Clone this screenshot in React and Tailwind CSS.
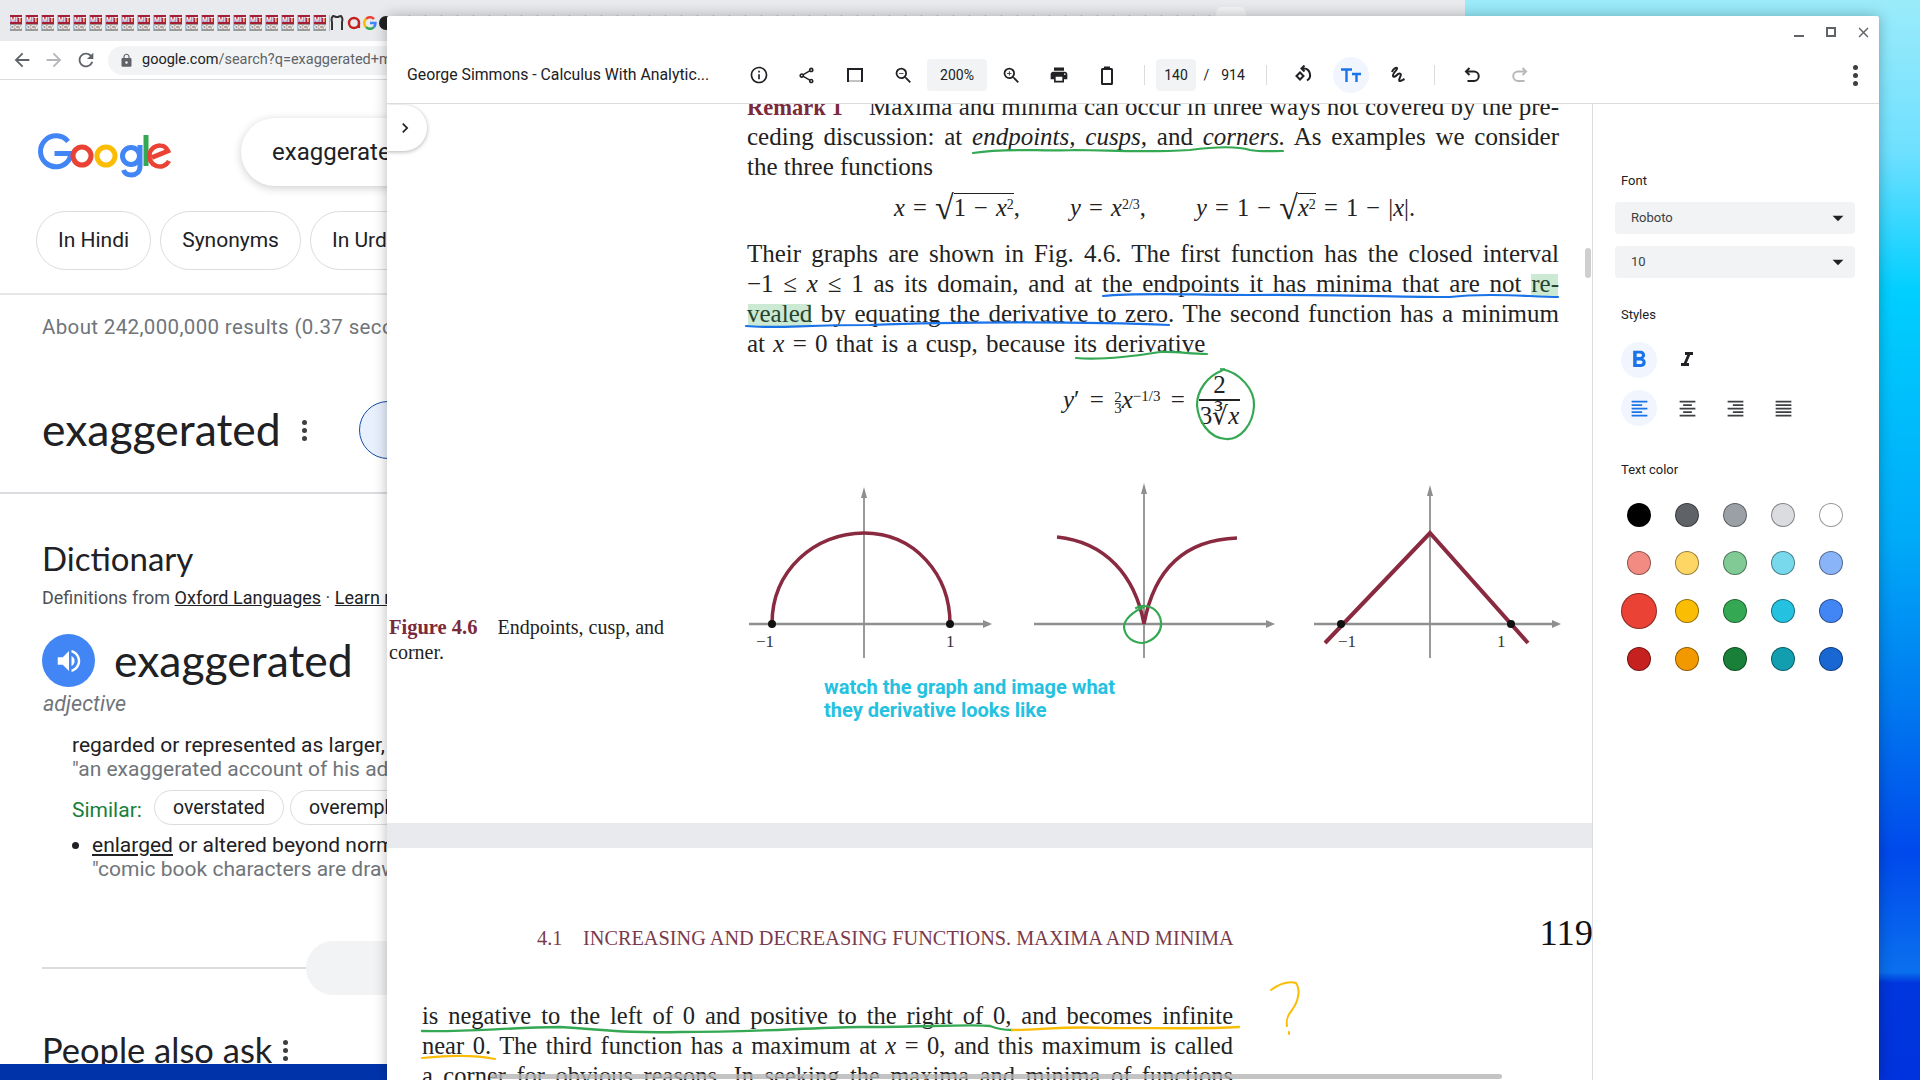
import React from "react";
import { MdInfoOutline, MdOutlineShare, MdZoomIn, MdZoomOut, MdPrint, MdLock, MdArrowBack, MdArrowForward, MdRefresh, MdChevronRight, MdArrowDropDown, MdFormatAlignLeft, MdFormatAlignCenter, MdFormatAlignRight, MdFormatAlignJustify, MdFormatBold, MdFormatItalic, MdClose, MdVolumeUp } from "react-icons/md";

const roboto = "font-['Roboto',sans-serif]";
const serif = "font-['Liberation_Serif',serif]";
const gsans = "font-['Lato','Roboto',sans-serif]";

function Favicons() {
  const items = Array.from({ length: 20 });
  const ticks = Array.from({ length: 51 });
  return (
    <div className="flex items-center h-[41px] pl-[10px] pt-[5px]">
      {items.map((_, i) => (
        <div key={i} className="w-[16px] h-[20px] flex items-center shrink-0">
          <div className="w-[12px] h-[16px] flex flex-col overflow-hidden">
            <div className="h-[9px] bg-[#a31f34] text-white text-[7px] leading-[9px] font-bold text-center font-['Liberation_Sans',sans-serif]">MIT</div>
            <div className="h-[7px] bg-[#9a9a9a] text-white text-[6px] leading-[7px] font-bold text-center font-['Liberation_Sans',sans-serif]">OCW</div>
          </div>
          <div className="w-px h-[16px] bg-[#b5b7ba] ml-[3px]" />
        </div>
      ))}
      <div className="w-[16px] h-[20px] flex items-center shrink-0">
        <svg width="14" height="16" viewBox="0 0 14 16"><path d="M2 15V7C1 4 2 2 3 1c1 0 2 .5 3 1h2c1-.5 2-1 3-1 1 1 2 3 1 6v8" fill="none" stroke="#333" strokeWidth="2" /></svg>
      </div>
      <div className="w-[16px] h-[20px] flex items-center justify-center shrink-0">
        <svg width="14" height="14" viewBox="0 0 14 14"><circle cx="7" cy="7" r="5" fill="none" stroke="#c5221f" strokeWidth="2.4" /><path d="M12 7v5" stroke="#c5221f" strokeWidth="2.2" /></svg>
      </div>
      <div className="w-[16px] h-[20px] flex items-center justify-center shrink-0">
        <svg width="14" height="14" viewBox="0 0 14 14" fill="none" strokeWidth="2.6"><path d="M11 3A5.4 5.4 0 0 0 3 3" stroke="#ea4335" /><path d="M3 3a5.4 5.4 0 0 0 0 8" stroke="#fbbc04" /><path d="M3 11a5.4 5.4 0 0 0 8 0" stroke="#34a853" /><path d="M11 11c1-1 1.400-2 1.400-4H7" stroke="#4285f4" /></svg>
      </div>
      <div className="w-[16px] h-[20px] flex items-center justify-center shrink-0">
        <div className="w-[14px] h-[14px] rounded-full bg-[#222]" />
      </div>
      {ticks.map((_, i) => (
        <div key={i} className="w-[16px] h-[16px] shrink-0 flex justify-end">
          <div className="w-px h-[16px] bg-[#b5b7ba]" />
        </div>
      ))}
    </div>
  );
}

function GoogleLogo() {
  return (
    <svg width="142" height="48" viewBox="0 0 140 48" fill="none" className="shrink-0 mt-[4px]">
      <path d="M32 7.500A15.500 15.500 0 1 0 32.500 26.500C34 24.500 34.500 22.500 34 19.500H18.500" stroke="#4285f4" strokeWidth="5" transform="translate(0,2)" />
      <circle cx="46" cy="24" r="9" stroke="#ea4335" strokeWidth="5" />
      <circle cx="70" cy="24" r="9" stroke="#fbbc04" strokeWidth="5" />
      <circle cx="95" cy="24" r="8.500" stroke="#4285f4" strokeWidth="5" />
      <path d="M104 13v21c0 6-4 9-8.500 9-4 0-7-2-8-5" stroke="#4285f4" strokeWidth="5" />
      <path d="M110 3v31" stroke="#34a853" strokeWidth="5" />
      <path d="M116 25.500l16-6.500C130 15 127.500 13.500 124.500 13.500A10.500 10.500 0 1 0 133 29" stroke="#ea4335" strokeWidth="4.600" />
    </svg>
  );
}

function Chip({ children }) {
  return <div className="h-[59px] px-[21px] pt-[1px] flex items-center rounded-[30px] border border-[#dadce0] text-[21px] text-[#202124] whitespace-nowrap shrink-0">{children}</div>;
}

function Dots({ className = "" }) {
  return (
    <div className={`flex flex-col gap-[3px] shrink-0 ${className}`}>
      <span className="w-[5px] h-[5px] rounded-full bg-[#3c4043]" />
      <span className="w-[5px] h-[5px] rounded-full bg-[#3c4043]" />
      <span className="w-[5px] h-[5px] rounded-full bg-[#3c4043]" />
    </div>
  );
}

function BrowserWindow() {
  return (
    <div className={`absolute left-0 top-0 w-[1465px] h-[1064px] bg-white overflow-hidden flex flex-col ${roboto}`}>
      <div className="h-[41px] bg-[#e8eaed] shrink-0 relative">
        <Favicons />
        <div className="absolute left-[1216px] top-[7px] w-[30px] h-[34px] rounded-t-[6px] bg-[#f4f5f6]" />
      </div>
      <div className="h-[39px] shrink-0 border-b border-[#dadce0] flex items-center bg-white">
        <MdArrowBack className="ml-[11px] text-[#5f6368]" size={22} />
        <MdArrowForward className="ml-[10px] text-[#b4b6b9]" size={22} />
        <MdRefresh className="ml-[10px] text-[#5f6368]" size={22} />
        <div className="ml-[11px] w-[700px] h-[29px] rounded-full bg-[#f1f3f4] flex items-center pl-[11px] text-[14.500px] whitespace-nowrap">
          <MdLock className="text-[#5f6368] mr-[8px]" size={15} />
          <span className="text-[#202124]">google.com</span>
          <span className="text-[#5f6368]">/search?q=exaggerated+meaning</span>
        </div>
      </div>
      <div className="flex items-center h-[148px] shrink-0 pl-[35px]">
        <GoogleLogo />
        <div className="ml-[64px] w-[900px] h-[68px] rounded-[34px] bg-white shadow-[0_2px_8px_rgba(32,33,36,0.22)] pl-[31px] flex items-center text-[24px] text-[#202124] -mt-[4px]">exaggerated</div>
      </div>
      <div className="flex gap-[9px] pl-[36px] -mt-[17px] h-[84px] border-b-2 border-[#e6e7e9] shrink-0">
        <Chip>In Hindi</Chip>
        <Chip>Synonyms</Chip>
        <Chip>In Urdu</Chip>
      </div>
      <div className="pl-[42px] pt-[18px] h-[46px] shrink-0 text-[20.500px] tracking-[0.35px] leading-[28px] text-[#70757a] whitespace-nowrap">About 242,000,000 results (0.37 seconds)</div>
      <div className="h-[153px] shrink-0 flex items-center pl-[42px] pt-[27px] border-b-2 border-[#dadce0]">
        <span className={`${gsans} text-[44.500px] leading-[60px] text-[#202124] w-[260px] whitespace-nowrap -mt-[2px]`}>exaggerated</span>
        <Dots />
        <div className="ml-[52px] w-[58px] h-[58px] rounded-full bg-[#e8f0fe] border border-[#174ea6] shrink-0" />
      </div>
      <div className={`pl-[42px] pt-[43px] shrink-0 h-[86px] ${gsans} text-[33px] leading-[42px] text-[#202124]`}>Dictionary</div>
      <div className="pl-[42px] pt-[5px] h-[31px] shrink-0 text-[18px] leading-[26px] text-[#4d5156] whitespace-nowrap">
        Definitions from <span className="underline text-[#202124]">Oxford Languages</span> · <span className="underline text-[#202124]">Learn more</span>
      </div>
      <div className="flex items-center ml-[42px] mt-[23px] h-[53px] shrink-0">
        <div className="w-[53px] h-[53px] rounded-full bg-[#4285f4] flex items-center justify-center shrink-0">
          <MdVolumeUp className="text-white" size={30} />
        </div>
        <span className={`${gsans} text-[44.500px] leading-[53px] text-[#202124] ml-[19px] whitespace-nowrap -mt-[2px]`}>exaggerated</span>
      </div>
      <div className="pl-[43px] pt-[3px] h-[31px] shrink-0 text-[21.500px] italic leading-[28px] text-[#70757a]">adjective</div>
      <div className="pl-[72px] pt-[15px] h-[39px] shrink-0 text-[21px] leading-[24px] whitespace-nowrap text-[#202124]">regarded or represented as larger, better, or worse than in reality.</div>
      <div className="pl-[72px] h-[24px] shrink-0 text-[21px] leading-[24px] whitespace-nowrap text-[#70757a]">"an exaggerated account of his adventures"</div>
      <div className="pl-[72px] pt-[9px] flex items-start gap-[12px] whitespace-nowrap h-[44px] shrink-0">
        <span className="text-[21px] text-[#188038] leading-[24px] pt-[8px] w-[70px]">Similar:</span>
        <div className="h-[35px] rounded-full border border-[#dadce0] px-[18px] flex items-center text-[19.500px] text-[#202124]">overstated</div>
        <div className="h-[35px] rounded-full border border-[#dadce0] px-[18px] flex items-center text-[19.500px] text-[#202124] -ml-[6px]">overemphasized</div>
      </div>
      <div className="pl-[72px] mt-[8px] flex items-center whitespace-nowrap h-[24px] text-[21px] text-[#202124] leading-[24px] shrink-0">
        <span className="w-[7px] h-[7px] rounded-full bg-[#202124] mr-[13px]" />
        <span><span className="underline">enlarged</span> or altered beyond normal proportions.</span>
      </div>
      <div className="pl-[92px] h-[24px] shrink-0 text-[21px] leading-[24px] whitespace-nowrap text-[#70757a]">"comic book characters are drawn with exaggerated features"</div>
      <div className="flex items-center pl-[42px] pt-[60px] shrink-0">
        <div className="w-[264px] h-[2px] bg-[#dadce0]" />
        <div className="w-[300px] h-[54px] rounded-full bg-[#f1f3f4]" />
      </div>
      <div className="flex items-center pl-[42px] pt-[33px] shrink-0">
        <span className={`${gsans} text-[34.500px] leading-[44px] text-[#202124] whitespace-nowrap`}>People also ask</span>
        <Dots className="ml-[11px]" />
      </div>
    </div>
  );
}

function IconCell({ children, className = "" }) {
  return <div className={`w-[48px] h-[36px] flex items-center justify-center shrink-0 text-[#202124] ${className}`}>{children}</div>;
}

function Sep() {
  return <div className="w-px h-[20px] bg-[#dadce0] shrink-0" />;
}

function PdfToolbar() {
  return (
    <div className="h-[57px] shrink-0 border-b border-[#dadce0] flex items-center text-[#202124]">
      <div className="w-[348px] pl-[20px] text-[15.800px] whitespace-nowrap shrink-0">George Simmons - Calculus With Analytic...</div>
      <IconCell><MdInfoOutline size={20} /></IconCell>
      <IconCell className="-translate-x-[1px]"><MdOutlineShare size={19} /></IconCell>
      <IconCell>
        <svg width="16" height="14" viewBox="0 0 16 14" fill="none" stroke="#202124" strokeWidth="2"><path d="M1 14V1h14v13" /><path d="M2 13h12" strokeWidth="1" stroke="#888" /></svg>
      </IconCell>
      <IconCell><MdZoomOut size={21} /></IconCell>
      <div className="w-[60px] h-[32px] rounded bg-[#f1f3f4] flex items-center justify-center text-[14px] shrink-0">200%</div>
      <IconCell><MdZoomIn size={21} /></IconCell>
      <IconCell><MdPrint size={20} /></IconCell>
      <IconCell>
        <svg width="12" height="19" viewBox="0 0 12 19" fill="none" stroke="#202124" strokeWidth="2"><rect x="1" y="3" width="10" height="15" rx="0.5" /><path d="M3 1.500h6" /></svg>
      </IconCell>
      <div className="w-[13px] shrink-0" />
      <Sep />
      <div className="w-[11px] shrink-0" />
      <div className="w-[40px] h-[32px] rounded bg-[#f1f3f4] flex items-center justify-center text-[14px] shrink-0">140</div>
      <div className="w-[21px] text-center text-[14px] shrink-0">/</div>
      <div className="w-[32px] text-center text-[14px] shrink-0">914</div>
      <div className="w-[17px] shrink-0" />
      <Sep />
      <div className="w-[12px] shrink-0" />
      <IconCell>
        <svg width="20" height="20" viewBox="0 0 20 20" fill="none" stroke="#202124" strokeWidth="2"><path d="M3.500 11l3.500-3.500 3.500 3.500-3.500 3.500z" /><path d="M9 3.500h2a6.500 6.500 0 0 1 3 12" /><path d="M11.500 0.500L8.500 3.500l3 3" /></svg>
      </IconCell>
      <div className="w-[48px] h-[36px] flex items-center justify-center shrink-0">
        <div className="w-[36px] h-[36px] rounded-full bg-[#f1f6fe] flex items-center justify-center">
          <svg width="20" height="14" viewBox="0 0 20 14" fill="none" stroke="#1a73e8" strokeWidth="2.400"><path d="M0 1.500h11M5.500 1.500V14" /><path d="M11 6h9M15.500 6v8" /></svg>
        </div>
      </div>
      <IconCell>
        <svg width="18" height="18" viewBox="0 0 18 18" fill="none" stroke="#202124" strokeWidth="2"><path d="M2 6c1-3 4-5 5-4 1 2-5 5-4 8 .5 2 3 0 5-2 2-1 3.500 0 2.500 2-1 3-2 4-1 5 1 .5 3-1 5-2" /></svg>
      </IconCell>
      <div className="w-[11px] shrink-0" />
      <Sep />
      <div className="w-[13px] shrink-0" />
      <IconCell>
        <svg width="16" height="16" viewBox="0 0 16 16" fill="none" stroke="#202124" strokeWidth="2"><path d="M5.500 1L2 4.500 5.500 8" /><path d="M2 4.500h8a4 4 0 0 1 0 9.500H3.500" /></svg>
      </IconCell>
      <IconCell>
        <svg width="16" height="16" viewBox="0 0 16 16" fill="none" stroke="#b8b8b8" strokeWidth="2"><path d="M10.500 1L14 4.500 10.500 8" /><path d="M14 4.500H6a4 4 0 0 0 0 9.500h6.500" /></svg>
      </IconCell>
      <div className="ml-auto w-[48px] h-[36px] flex items-center justify-center shrink-0"><Dots /></div>
    </div>
  );
}

function L({ children, last = true, className = "" }) {
  return <div className={`h-[30px] leading-[30px] ${last ? "[text-align-last:justify]" : "whitespace-nowrap"} ${className}`}>{children}</div>;
}

function Ink() {
  const green = "#34a853", blue = "#1a73e8", yellow = "#fbbc04";
  return (
    <svg className="absolute left-0 top-0 pointer-events-none" width="1205" height="976" viewBox="387 104 1205 976" fill="none" strokeLinecap="round">
      <rect x="1531" y="274" width="27" height="23" fill="#34a853" fillOpacity="0.25" />
      <rect x="748" y="304" width="63" height="23" fill="#34a853" fillOpacity="0.25" />
      <path d="M973 153C1010 147 1040 152 1075 150C1110 150 1140 153 1190 150C1220 146 1240 147 1250 150C1262 152 1270 151 1283 151" stroke={green} strokeWidth="2.200" />
      <path d="M1103 296C1140 292 1190 295 1250 295C1320 294 1400 297 1450 297C1490 292 1530 297 1558 297" stroke={blue} strokeWidth="2.200" />
      <path d="M746 326C775 329 800 325 870 325C950 322 1080 321 1169 325" stroke={blue} strokeWidth="2.200" />
      <path d="M1076 358C1100 360 1135 356 1160 352C1175 351 1190 354 1207 354" stroke={green} strokeWidth="2.200" />
      <path d="M1221 369C1240 372 1255 390 1254 406C1253 425 1240 440 1226 439C1208 438 1198 420 1197 405C1197 390 1208 376 1221 371L1224 369" stroke={green} strokeWidth="2.200" />
      <path d="M1144 607C1132 612 1124 620 1124 627C1125 638 1134 643 1143 643C1154 641 1162 632 1161 622C1160 612 1152 606 1145 606C1142 605 1138 607 1136 608" stroke={green} strokeWidth="2.200" />
      <path d="M422 1031C470 1032 500 1028 560 1027C610 1030 620 1033 680 1032C760 1032 800 1028 860 1027C920 1027 975 1024 990 1026C1000 1030 1006 1030 1012 1030" stroke={green} strokeWidth="2.400" />
      <path d="M1012 1030C1040 1030 1060 1026 1110 1028C1170 1028 1210 1029 1239 1027" stroke={yellow} strokeWidth="2.400" />
      <path d="M422 1058C445 1056 470 1054 495 1059" stroke={yellow} strokeWidth="2.200" />
      <path d="M1271 990C1278 985 1288 981 1296 983C1301 990 1298 1002 1292 1010C1287 1016 1286 1020 1287 1026M1289 1032v2" stroke={yellow} strokeWidth="2" />
    </svg>
  );
}

function Graphs() {
  const maroon = "#8a2a40";
  const axis = "#8f8f8f";
  const label = "text-[17px] fill-[#333]";
  return (
    <svg className="absolute left-[358px] top-[376px]" width="830" height="190" viewBox="745 480 830 190" fill="none">
      <g stroke={axis} strokeWidth="2.500">
        <path d="M749 624H985" /><path d="M1034 624H1268" /><path d="M1314 624H1554" />
      </g>
      <g stroke={axis} strokeWidth="1.800">
        <path d="M864 490V658" /><path d="M1144 486V658" /><path d="M1430 488V658" />
      </g>
      <g fill={axis}>
        <path d="M992 624l-9-4v8z" /><path d="M1275 624l-9-4v8z" /><path d="M1561 624l-9-4v8z" />
        <path d="M864 487l-3 11h6z" /><path d="M1144 483l-3 11h6z" /><path d="M1430 485l-3 11h6z" />
      </g>
      <g stroke={maroon} strokeWidth="3.500">
        <path d="M772 624C772 570 815 533 864 533C915 533 950 575 950 624" />
        <path d="M1057 537C1105 542 1135 575 1144 624C1153 575 1180 540 1237 538" />
        <path d="M1325 643L1430 533L1528 643" strokeWidth="4" />
      </g>
      <g fill="#111">
        <circle cx="772" cy="624" r="4" /><circle cx="950" cy="624" r="4" /><circle cx="1341" cy="624" r="4" /><circle cx="1511" cy="624" r="4" />
      </g>
      <g className={serif}>
        <text x="756" y="647" className={label}>−1</text>
        <text x="946" y="647" className={label}>1</text>
        <text x="1338" y="647" className={label}>−1</text>
        <text x="1497" y="647" className={label}>1</text>
      </g>
    </svg>
  );
}

function PageOne() {
  const sup = "text-[14px]";
  const root = "text-[34px] leading-[0] align-[-3px] font-light";
  return (
    <div className={`h-[719px] shrink-0 relative overflow-hidden bg-white ${serif} text-[25px] text-[#222]`}>
      <div className="ml-[360px] w-[812px] -mt-[12px]">
        <L><span className="font-bold text-[#7b2a3c] text-[22.500px] mr-[20px]">Remark 1</span> Maxima and minima can occur in three ways not covered by the pre-</L>
        <L>ceding discussion: at <i>endpoints, cusps,</i> and <i>corners.</i> As examples we consider</L>
        <L last={false}>the three functions</L>
        <div className="h-[52px] leading-[52px] ml-[147px] whitespace-nowrap text-[24.500px] [word-spacing:2px]">
          <i>x</i> = <span className={root}>√</span><span className="border-t border-[#222]">1 − <i>x</i><sup className={sup}>2</sup></span>, <span className="ml-[42px]"><i>y</i> = <i>x</i><sup className={sup}>2/3</sup>,</span> <span className="ml-[42px]"><i>y</i> = 1 − <span className={root}>√</span><span className="border-t border-[#222]"><i>x</i><sup className={sup}>2</sup></span> = 1 − |<i>x</i>|.</span>
        </div>
        <div className="h-[5px]" />
        <L>Their graphs are shown in Fig. 4.6. The first function has the closed interval</L>
        <L>−1 ≤ <i>x</i> ≤ 1 as its domain, and at the endpoints it has minima that are not re-</L>
        <L>vealed by equating the derivative to zero. The second function has a minimum</L>
        <L last={false} className="[word-spacing:2px]">at <i>x</i> = 0 that is a cusp, because its derivative</L>
      </div>
      <div className="ml-[676px] mt-[11px] h-[60px] flex items-center whitespace-nowrap text-[25px] [word-spacing:4px]">
        <span><i>y</i>′ = <span className="text-[15px] align-middle inline-block text-center leading-[11px]">2<br />3</span><i>x</i><sup className="text-[15px]">−1/3</sup> =</span>
        <span className="ml-[14px] inline-flex flex-col items-center text-[25px] leading-[29px]">
          <span>2</span>
          <span className="border-t-2 border-[#222] px-[1px]">3∛<i>x</i></span>
        </span>
      </div>
      <Graphs />
      <div className="absolute left-[2px] top-[511px] w-[300px] text-[20px] leading-[25px]">
        <span className="font-bold text-[20.500px] text-[#7b2a3c] mr-[20px]">Figure 4.6</span>Endpoints, cusp, and corner.
      </div>
      <div className={`absolute left-[437px] top-[572px] w-[320px] ${roboto} font-bold text-[20px] leading-[23px] text-[#24c1e0]`}>watch the graph and image what<br />they derivative looks like</div>
    </div>
  );
}

function PageTwo() {
  return (
    <div className={`flex-1 bg-white relative overflow-hidden ${serif} text-[#222]`}>
      <div className="flex items-center h-[153px] pt-[26px] pl-[150px] whitespace-nowrap text-[#7b3a4c] text-[20.300px] leading-[24px]">
        <span className="w-[46px] shrink-0">4.1</span>
        <span>INCREASING AND DECREASING FUNCTIONS. MAXIMA AND MINIMA</span>
        <span className="ml-auto text-[36.500px] text-[#111] translate-x-[1px] -translate-y-[5px]">119</span>
      </div>
      <div className="ml-[35px] w-[811px] text-[24.500px]">
        <L>is negative to the left of 0 and positive to the right of 0, and becomes infinite</L>
        <L>near 0. The third function has a maximum at <i>x</i> = 0, and this maximum is called</L>
        <L>a corner for obvious reasons. In seeking the maxima and minima of functions</L>
      </div>
      <div className="absolute left-[103px] right-[90px] bottom-[1px] h-[5px] rounded bg-[#b5b5b5]/80" />
    </div>
  );
}

function Row({ children, className = "" }) {
  return <div className={`flex items-center ${className}`}>{children}</div>;
}

const colours = [
  ["#000000", "#5f6368", "#9aa0a6", "#dadce0", "#ffffff"],
  ["#f28b82", "#fdd663", "#81c995", "#78d9ec", "#8ab4f8"],
  ["#ea4335", "#fbbc04", "#34a853", "#24c1e0", "#4285f4"],
  ["#c5221f", "#f29900", "#188038", "#129eaf", "#1967d2"],
];

function SidePanel() {
  const label = "text-[13px] leading-[16px] text-[#202124]";
  const sel = "h-[32px] w-[240px] rounded-[4px] bg-[#f1f3f4] ml-[22px] flex items-center pl-[16px] pr-[4px] justify-between text-[13px] text-[#3c4043]";
  return (
    <div className={`w-[287px] shrink-0 border-l border-[#dadce0] bg-white flex flex-col ${roboto}`}>
      <div className={`${label} ml-[28px] mt-[69px]`}>Font</div>
      <div className={`${sel} mt-[13px]`}>Roboto<MdArrowDropDown size={26} className="text-[#202124]" /></div>
      <div className={`${sel} mt-[12px]`}>10<MdArrowDropDown size={26} className="text-[#202124]" /></div>
      <div className={`${label} ml-[28px] mt-[29px]`}>Styles</div>
      <Row className="ml-[28px] mt-[19px] gap-[12px]">
        <div className="w-[36px] h-[36px] rounded-full bg-[#f1f6fe] flex items-center justify-center text-[#1a73e8]"><MdFormatBold size={28} /></div>
        <div className="w-[36px] h-[36px] flex items-center justify-center text-[#202124]"><MdFormatItalic size={24} /></div>
      </Row>
      <Row className="ml-[28px] mt-[12px] gap-[12px]">
        <div className="w-[36px] h-[36px] rounded-full bg-[#f1f6fe] flex items-center justify-center text-[#1a73e8]"><MdFormatAlignLeft size={21} /></div>
        <div className="w-[36px] h-[36px] flex items-center justify-center text-[#3c4043]"><MdFormatAlignCenter size={21} /></div>
        <div className="w-[36px] h-[36px] flex items-center justify-center text-[#3c4043]"><MdFormatAlignRight size={21} /></div>
        <div className="w-[36px] h-[36px] flex items-center justify-center text-[#3c4043]"><MdFormatAlignJustify size={21} /></div>
      </Row>
      <div className={`${label} ml-[28px] mt-[36px]`}>Text color</div>
      <div className="ml-[28px] mt-[19px] flex flex-col gap-[12px]">
        {colours.map((row, i) => (
          <Row key={i} className="gap-[12px] h-[36px]">
            {row.map((c, j) => {
              const selected = i === 2 && j === 0;
              return (
                <div key={c} className="w-[36px] h-[36px] flex items-center justify-center">
                  <div
                    className={`${selected ? "w-[36px] h-[36px]" : "w-[24px] h-[24px]"} rounded-full border border-black/40`}
                    style={{ backgroundColor: c }}
                  />
                </div>
              );
            })}
          </Row>
        ))}
      </div>
    </div>
  );
}

function PdfWindow() {
  return (
    <div className={`absolute left-[387px] top-[16px] w-[1492px] h-[1064px] bg-white rounded-t-[3px] shadow-[0_0_14px_rgba(0,0,0,0.28)] flex flex-col overflow-hidden ${roboto}`}>
      <div className="h-[31px] shrink-0 flex items-start justify-end text-[#5f6368] bg-white">
        <div className="w-[32px] h-[31px] flex items-end justify-center pb-[10px]"><div className="w-[10px] h-[2px] bg-[#5f6368]" /></div>
        <div className="w-[32px] h-[31px] flex items-center justify-center pt-[1px]"><div className="w-[10px] h-[10px] border-2 border-[#5f6368]" /></div>
        <div className="w-[32px] h-[31px] flex items-center justify-center pt-[1px]"><MdClose size={17} /></div>
      </div>
      <PdfToolbar />
      <div className="flex flex-1 min-h-0">
        <div className="flex-1 min-w-0 flex flex-col relative overflow-hidden bg-white">
          <PageOne />
          <div className="h-[25px] shrink-0 bg-[#e8eaed]" />
          <PageTwo />
          <Ink />
          <div className="absolute left-0 top-[1px] w-[40px] h-[46px] pr-[4px] rounded-r-[23px] bg-white shadow-[0_1px_4px_rgba(0,0,0,0.3)] flex items-center justify-center text-[#202124]">
            <MdChevronRight size={20} />
          </div>
          <div className="absolute right-[1px] top-[144px] w-[6px] h-[30px] rounded bg-[#cfcfcf]" />
        </div>
        <SidePanel />
      </div>
    </div>
  );
}

export default function App() {
  return (
    <div className="relative w-[1920px] h-[1080px] overflow-hidden bg-[linear-gradient(180deg,#9bebfa_0%,#6fe0ff_14%,#00cfff_27%,#00aaf8_50%,#007af0_65%,#0049ec_79%,#0a70ee_90%,#0036dd_91%,#0033dd_100%)]">
      <div className="absolute left-0 w-[400px] bottom-0 h-[16px] bg-[#0033aa]" />
      <BrowserWindow />
      <PdfWindow />
    </div>
  );
}
